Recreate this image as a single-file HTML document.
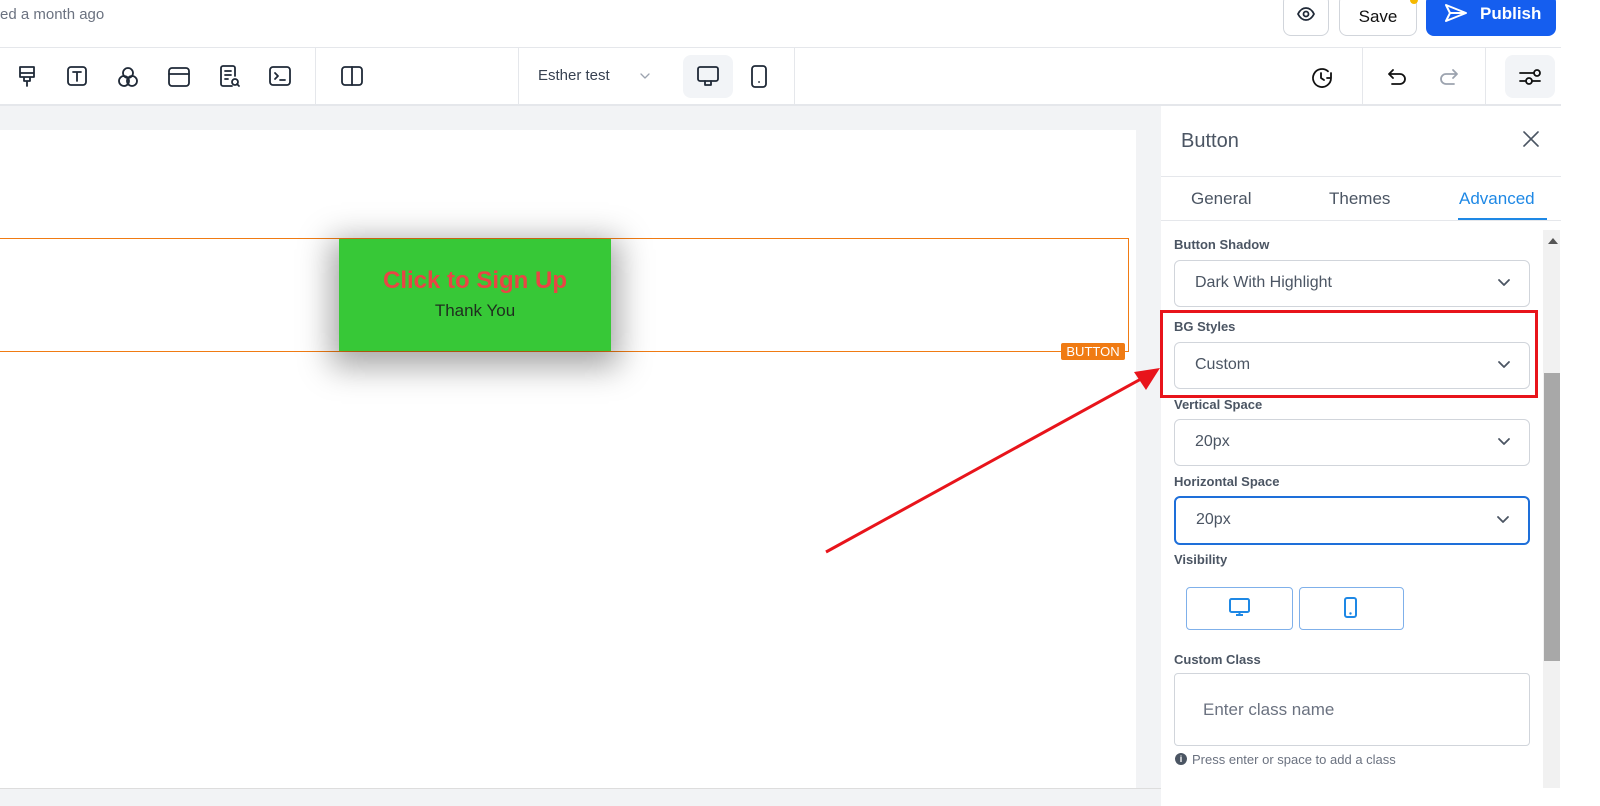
<!DOCTYPE html>
<html><head><style>
*{box-sizing:border-box;margin:0;padding:0}
body{width:1600px;height:806px;overflow:hidden;background:#fff;font-family:"Liberation Sans",sans-serif;position:relative}
.a{position:absolute}
.ic{position:absolute;fill:none;stroke:#1f2937;stroke-width:1.8;stroke-linecap:round;stroke-linejoin:round}
.lbl{position:absolute;left:1174px;font-size:13px;color:#4b5563;font-weight:bold}
.sel{position:absolute;left:1174px;width:356px;height:47px;border:1px solid #d1d5db;border-radius:6px;font-size:16px;color:#4b5563;padding:13px 0 0 20px}
.sel svg{position:absolute;right:18px;top:17px}
</style></head><body>
<div class="a" style="left:0;top:6px;font-size:15px;color:#6b7280">ed a month ago</div>
<div class="a" style="left:1283px;top:-6px;width:46px;height:42px;border:1px solid #d1d5db;border-radius:8px"></div>
<svg class="ic" style="left:1296px;top:5px" width="20" height="18" viewBox="0 0 20 18"><path d="M2 9c2-4 5-6 8-6s6 2 8 6c-2 4-5 6-8 6s-6-2-8-6z"/><circle cx="10" cy="9" r="2.5"/></svg>
<div class="a" style="left:1339px;top:-6px;width:78px;height:42px;border:1px solid #d1d5db;border-radius:8px;font-size:17px;color:#111;text-align:center;padding-top:12px">Save</div>
<div class="a" style="left:1410px;top:-4px;width:8px;height:8px;border-radius:50%;background:#f5b800"></div>
<div class="a" style="left:1426px;top:-6px;width:130px;height:42px;background:#155eef;border-radius:8px;color:#fff;font-size:17px;font-weight:bold;padding:10px 0 0 54px">Publish</div>
<svg class="a" style="left:1444px;top:3px" width="24" height="20" viewBox="0 0 24 20" fill="none" stroke="#fff" stroke-width="2" stroke-linejoin="round"><path d="M2 2l20 8-20 8 4-8z M6 10h16"/></svg>
<div class="a" style="left:0;top:47px;width:1600px;height:1px;background:#e5e7eb"></div>
<div class="a" style="left:0;top:104px;width:1600px;height:2px;background:#e5e7eb"></div>
<div class="a" style="left:315px;top:48px;width:1px;height:56px;background:#e5e7eb"></div>
<div class="a" style="left:518px;top:48px;width:1px;height:56px;background:#e5e7eb"></div>
<div class="a" style="left:794px;top:48px;width:1px;height:56px;background:#e5e7eb"></div>
<div class="a" style="left:1362px;top:48px;width:1px;height:56px;background:#e5e7eb"></div>
<div class="a" style="left:1485px;top:48px;width:1px;height:56px;background:#e5e7eb"></div>
<svg class="ic" style="left:16px;top:65px" width="22" height="24" viewBox="0 0 22 24"><path d="M4 2h14v10H4z M4 8h14 M8 12v4h6v-4 M11 16v5"/></svg>
<svg class="ic" style="left:66px;top:65px" width="22" height="22" viewBox="0 0 22 22"><rect x="2" y="2" width="18" height="18" rx="3"/><path d="M7 7h8 M11 7v9"/></svg>
<svg class="ic" style="left:116px;top:65px" width="24" height="24" viewBox="0 0 24 24"><circle cx="12" cy="8" r="5"/><circle cx="8" cy="16" r="5"/><circle cx="16" cy="16" r="5"/></svg>
<svg class="ic" style="left:167px;top:66px" width="24" height="22" viewBox="0 0 24 22"><rect x="2" y="2" width="20" height="18" rx="3"/><path d="M2 8h20"/></svg>
<svg class="ic" style="left:218px;top:64px" width="24" height="26" viewBox="0 0 24 26"><path d="M14 22H5a2 2 0 0 1-2-2V4a2 2 0 0 1 2-2h10a2 2 0 0 1 2 2v8 M7 7h6 M7 11h6 M7 15h3"/><circle cx="17" cy="18" r="3"/><path d="M19 20l2 2"/></svg>
<svg class="ic" style="left:268px;top:65px" width="24" height="22" viewBox="0 0 24 22"><rect x="2" y="2" width="20" height="18" rx="3"/><path d="M7 8l3 3-3 3 M12 15h5"/></svg>
<svg class="ic" style="left:340px;top:65px" width="24" height="22" viewBox="0 0 24 22"><rect x="2" y="2" width="20" height="18" rx="3"/><path d="M12 2v18"/></svg>
<div class="a" style="left:538px;top:67px;font-size:15px;color:#374151">Esther test</div>
<svg class="ic" style="left:639px;top:72px;stroke:#9ca3af;stroke-width:1.3" width="12" height="8" viewBox="0 0 12 8"><path d="M2 2l4 4 4-4"/></svg>
<div class="a" style="left:683px;top:55px;width:50px;height:43px;background:#f2f4f7;border-radius:8px"></div>
<svg class="ic" style="left:696px;top:65px" width="24" height="22" viewBox="0 0 24 22"><rect x="2" y="2" width="20" height="14" rx="2"/><path d="M9 16v4h6v-4"/></svg>
<svg class="ic" style="left:750px;top:64px" width="18" height="26" viewBox="0 0 18 26"><rect x="2" y="2" width="14" height="21" rx="3"/><path d="M9 18h0.1"/></svg>
<svg class="ic" style="left:1309px;top:65px;stroke:#111" width="26" height="26" viewBox="0 0 26 26"><path d="M22 13a9 9 0 1 1-3-6.7 M12 8v5l3 2 M22 8v5h-4"/></svg>
<svg class="ic" style="left:1386px;top:66px;stroke:#111" width="24" height="22" viewBox="0 0 24 22"><path d="M7 4L3 8l4 4 M3 8h11a5 5 0 0 1 0 10H6"/></svg>
<svg class="ic" style="left:1436px;top:66px;stroke:#9ca3af" width="24" height="22" viewBox="0 0 24 22"><path d="M17 4l4 4-4 4 M21 8H10a5 5 0 0 0 0 10h8"/></svg>
<div class="a" style="left:1505px;top:55px;width:50px;height:43px;background:#f2f4f7;border-radius:8px"></div>
<svg class="ic" style="left:1518px;top:66px;stroke:#111" width="26" height="22" viewBox="0 0 26 22"><path d="M2 7h14 M2 15h6"/><circle cx="19" cy="7" r="3"/><circle cx="11" cy="15" r="3"/><path d="M14 15h8"/></svg>
<!-- canvas -->
<div class="a" style="left:0;top:106px;width:1161px;height:700px;background:#f2f3f5"></div>
<div class="a" style="left:0;top:130px;width:1136px;height:658px;background:#fff"></div>
<div class="a" style="left:0;top:788px;width:1161px;height:18px;background:#f2f3f5;border-top:1px solid #ddd"></div>
<div class="a" style="left:-2px;top:238px;width:1131px;height:114px;border:1px solid #f07b13"></div>
<div class="a" style="left:1061px;top:343px;width:64px;height:17px;background:#f07b13;color:#fff;font-size:13px;text-align:center;line-height:17px;border-radius:2px">BUTTON</div>
<div class="a" style="left:339px;top:239px;width:272px;height:112px;background:#37c837;box-shadow:0 8px 30px 8px rgba(0,0,0,.35);text-align:center">
<div style="margin-top:28px;font-size:24px;font-weight:bold;color:#e84545">Click to Sign Up</div>
<div style="margin-top:6px;font-size:17px;color:#1f2d1f">Thank You</div></div>
<svg class="a" style="left:820px;top:360px" width="350" height="200" viewBox="0 0 350 200"><path d="M6 192L330 14" stroke="#e8141b" stroke-width="3"/><path d="M340 8L314 12L326 30z" fill="#e8141b"/></svg>
<!-- panel -->
<div class="a" style="left:1161px;top:106px;width:400px;height:700px;background:#fff"></div>
<div class="a" style="left:1181px;top:130px;font-size:20px;color:#4b5563">Button</div>
<svg class="ic" style="left:1522px;top:130px;stroke:#4b5563;stroke-width:1.6" width="18" height="18" viewBox="0 0 18 18"><path d="M2 2l14 14 M16 2L2 16"/></svg>
<div class="a" style="left:1161px;top:176px;width:400px;height:1px;background:#e5e7eb"></div>
<div class="a" style="left:1191px;top:189px;font-size:17px;color:#4b5563">General</div>
<div class="a" style="left:1329px;top:189px;font-size:17px;color:#4b5563">Themes</div>
<div class="a" style="left:1459px;top:189px;font-size:17px;color:#1e88e5">Advanced</div>
<div class="a" style="left:1161px;top:220px;width:400px;height:1px;background:#e5e7eb"></div>
<div class="a" style="left:1458px;top:218px;width:89px;height:2px;background:#1e88e5"></div>
<div class="a" style="left:1543px;top:230px;width:17px;height:558px;background:#f1f1f1"></div>
<div class="a" style="left:1544px;top:373px;width:16px;height:288px;background:#a8a8a8"></div>
<div class="a" style="left:1548px;top:238px;width:0;height:0;border-left:5px solid transparent;border-right:5px solid transparent;border-bottom:6px solid #555"></div>
<div class="lbl" style="top:237px">Button Shadow</div>
<div class="sel" style="top:260px">Dark With Highlight<svg class="ic" style="stroke:#4b5563" width="14" height="10" viewBox="0 0 14 10"><path d="M2 2l5 5 5-5"/></svg></div>
<div class="lbl" style="top:319px">BG Styles</div>
<div class="sel" style="top:342px">Custom<svg class="ic" style="stroke:#4b5563" width="14" height="10" viewBox="0 0 14 10"><path d="M2 2l5 5 5-5"/></svg></div>
<div class="a" style="left:1160px;top:310px;width:378px;height:88px;border:3px solid #e8141b"></div>
<div class="lbl" style="top:397px">Vertical Space</div>
<div class="sel" style="top:419px">20px<svg class="ic" style="stroke:#4b5563" width="14" height="10" viewBox="0 0 14 10"><path d="M2 2l5 5 5-5"/></svg></div>
<div class="lbl" style="top:474px">Horizontal Space</div>
<div class="sel" style="top:496px;border:2px solid #1e6fd9;height:49px">20px<svg class="ic" style="stroke:#4b5563" width="14" height="10" viewBox="0 0 14 10"><path d="M2 2l5 5 5-5"/></svg></div>
<div class="lbl" style="top:552px">Visibility</div>
<div class="a" style="left:1186px;top:587px;width:107px;height:43px;border:1px solid #7fb0ea;border-radius:4px"></div>
<div class="a" style="left:1299px;top:587px;width:105px;height:43px;border:1px solid #7fb0ea;border-radius:4px"></div>
<svg class="a" style="left:1229px;top:598px" width="21" height="19" viewBox="0 0 21 19"><rect x="1" y="1" width="19" height="13" rx="1.5" fill="none" stroke="#1e88e5" stroke-width="2"/><path d="M7 17h7 M10.5 14v3" stroke="#1e88e5" stroke-width="2"/></svg>
<svg class="a" style="left:1344px;top:597px" width="13" height="22" viewBox="0 0 13 22"><rect x="1" y="1" width="11" height="19" rx="2" fill="none" stroke="#1e88e5" stroke-width="2"/><circle cx="6.5" cy="16.5" r="1.2" fill="#1e88e5"/></svg>
<div class="lbl" style="top:652px">Custom Class</div>
<div class="a" style="left:1174px;top:673px;width:356px;height:73px;border:1px solid #d1d5db;border-radius:4px;font-size:17px;color:#6b7280;padding:26px 0 0 28px">Enter class name</div>
<div class="a" style="left:1175px;top:753px;width:12px;height:12px;border-radius:50%;background:#4b5563;color:#fff;font-size:9px;font-weight:bold;text-align:center;line-height:12px">i</div>
<div class="a" style="left:1192px;top:752px;font-size:13px;color:#6b7280">Press enter or space to add a class</div>
<div class="a" style="left:1561px;top:0;width:39px;height:806px;background:#fff"></div>
</body></html>
